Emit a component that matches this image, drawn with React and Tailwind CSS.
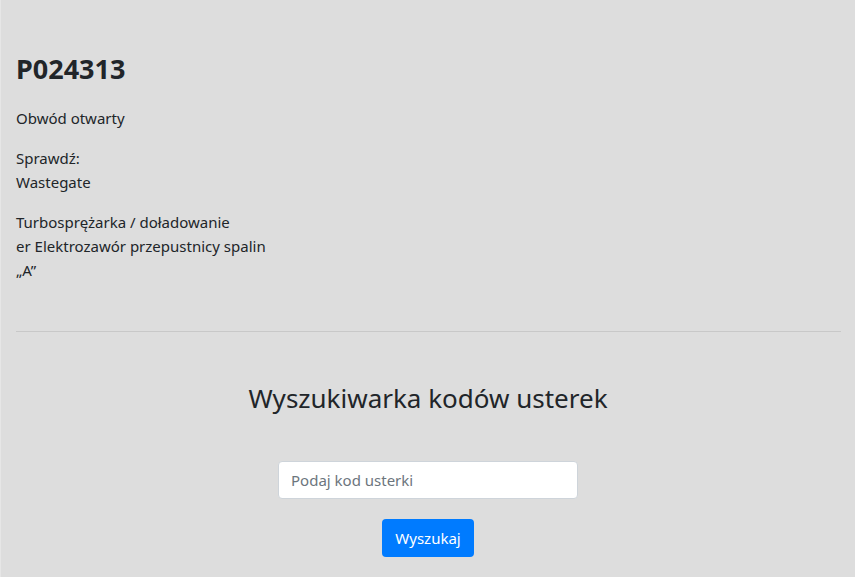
export default function App() {
  return (
    <div className="min-h-[577px] bg-[#dddddd] border-l border-[#e6e6e6] font-['Noto_Sans',sans-serif] text-[#212529] text-[15px] leading-6">
      <div className="px-[15px] pt-[53px]">
        <h2 className="text-[27px] leading-[31px] font-bold">P024313</h2>
        <p className="mt-[22px] mb-4">Obwód otwarty</p>
        <p className="mb-4">
          Sprawdź:
          <br />
          Wastegate
        </p>
        <p>
          Turbosprężarka / doładowanie
          <br />
          er Elektrozawór przepustnicy spalin
          <br />
          „A”
        </p>
        <hr className="mt-[49px] mr-[-1px] border-t border-[#c8c8c8]" />
        <h3 className="mt-[50px] text-center text-[26px] leading-[32px] font-normal">
          Wyszukiwarka kodów usterek
        </h3>
        <form className="mt-[47px] flex flex-col items-center" onSubmit={(e) => e.preventDefault()}>
          <input
            type="text"
            placeholder="Podaj kod usterki"
            className="w-[300px] h-[38px] px-3 bg-white border border-[#ced4da] rounded text-[15px] text-[#495057] placeholder:text-[#6c757d] outline-none"
          />
          <button
            type="submit"
            className="mt-5 h-[38px] px-[13px] bg-[#007bff] text-white rounded text-[15px]"
          >
            Wyszukaj
          </button>
        </form>
      </div>
    </div>
  );
}
